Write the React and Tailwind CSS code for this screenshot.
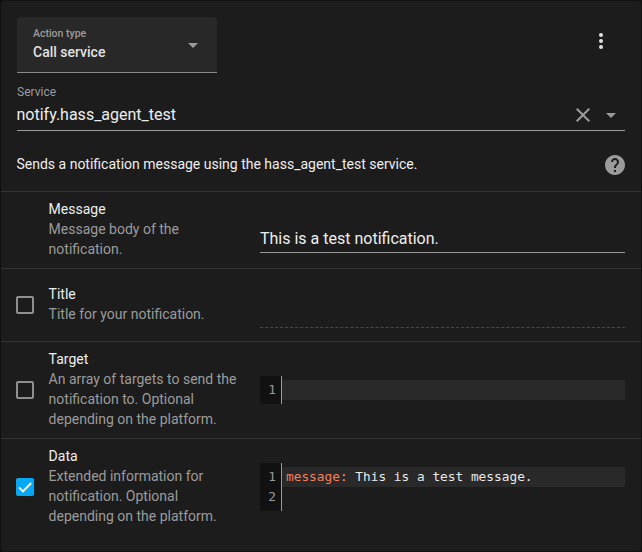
import React from "react";

function Caret() {
  return (
    <svg width="24" height="24" viewBox="0 0 24 24" fill="#9b9b9b">
      <path d="M7 10l5 5 5-5z" />
    </svg>
  );
}

function Checkbox({ checked }) {
  if (!checked) {
    return <div className="h-[18px] w-[18px] rounded-[2px] border-2 border-[#8f8f8f]" />;
  }
  return (
    <div className="h-[18px] w-[18px] rounded-[2px] bg-[#03a9f4]">
      <svg width="18" height="18" viewBox="0 0 18 18" fill="none" stroke="#fff" strokeWidth="1.9">
        <path d="M3 9.4l4 4L15.2 5" />
      </svg>
    </div>
  );
}

function Row({ height, labelTop = "pt-[7px]", title, lines, control, children }) {
  return (
    <div className={"flex border-t border-[#343434] pr-4 pl-[15px] " + height}>
      <div className="flex w-[32.6px] shrink-0 items-center">{control}</div>
      <div className={"w-[211.4px] shrink-0 whitespace-nowrap text-[14px] leading-5 " + labelTop}>
        <div className="text-[#eeeeee]">{title}</div>
        {lines.map((line) => (
          <div key={line} className="text-[#9b9b9b]">{line}</div>
        ))}
      </div>
      <div className="flex-1">{children}</div>
    </div>
  );
}

function Editor({ numbers, children }) {
  return (
    <div className="flex font-['DejaVu_Sans_Mono',monospace] text-[12.8px] leading-5">
      <div className="w-[22px] border-r border-[#9b9b9b] bg-[#111111] py-1 pr-[5px] text-right text-[#9b9b9b]">
        {numbers.map((n) => (
          <div key={n}>{n}</div>
        ))}
      </div>
      <div className="flex-1 py-1">
        <div className="h-5 bg-[#292929] pl-1 whitespace-pre text-[#e8e8e8]">{children}</div>
      </div>
    </div>
  );
}

export default function App() {
  return (
    <div className="h-[552px] w-[642px] bg-[#111111] p-px font-['Roboto',sans-serif]">
      <div className="h-[550px] overflow-hidden rounded-[4px] bg-[#1c1c1c]">
        <div className="flex h-[72px] justify-between px-4 pt-4">
          <div className="flex h-14 w-[200px] items-center justify-between rounded-t-[4px] border-b border-[#8b8b8b] bg-[#282828] pr-3 pl-4">
            <div className="font-medium whitespace-nowrap">
              <div className="text-[10.5px] leading-[14px] text-[#9b9b9b]">Action type</div>
              <div className="pt-px text-[14px] leading-[20px] text-[#e1e1e1]">Call service</div>
            </div>
            <Caret />
          </div>
          <div className="flex w-12 items-center justify-center">
            <svg width="24" height="24" viewBox="0 0 24 24" fill="#e1e1e1" className="-mt-2">
              <circle cx="12" cy="6" r="2" />
              <circle cx="12" cy="12" r="2" />
              <circle cx="12" cy="18" r="2" />
            </svg>
          </div>
        </div>

        <div className="mr-4 ml-4 h-[58px] border-b border-[#9b9b9b] pt-[9px]">
          <div className="text-[12px] leading-5 text-[#9b9b9b]">Service</div>
          <div className="-ml-[0.5px] flex h-6 items-center justify-between pt-0.5 pr-0.5">
            <div className="text-[16px] leading-6 text-[#eeeeee]">notify.hass_agent_test</div>
            <div className="flex items-center gap-1">
              <svg width="24" height="24" viewBox="0 0 24 24" fill="#9b9b9b">
                <path d="M19 6.41L17.59 5 12 10.59 6.41 5 5 6.41 10.59 12 5 17.59 6.41 19 12 13.41 17.59 19 19 17.59 13.41 12 19 6.41z" />
              </svg>
              <Caret />
            </div>
          </div>
        </div>

        <div className="flex h-[60px] items-center justify-between pt-2 pr-[14px] pl-[15.5px]">
          <div className="-mt-0.5 text-[14px] leading-5 text-[#eeeeee]">
            Sends a notification message using the hass_agent_test service.
          </div>
          <svg width="24" height="24" viewBox="0 0 24 24" fill="#9b9b9b">
            <path d="M12 2C6.48 2 2 6.48 2 12s4.48 10 10 10 10-4.48 10-10S17.52 2 12 2zm1 17h-2v-2h2v2zm2.07-7.75l-.9.92C13.45 12.9 13 13.5 13 15h-2v-.5c0-1.1.45-2.1 1.17-2.83l1.24-1.26c.37-.36.59-.86.59-1.41 0-1.1-.9-2-2-2s-2 .9-2 2H8c0-2.21 1.79-4 4-4s4 1.79 4 4c0 .88-.36 1.68-.93 2.25z" />
          </svg>
        </div>

        <Row height="h-[77px]" title="Message" lines={["Message body of the", "notification."]}>
          <div className="h-[61px] border-b border-[#9b9b9b] pt-[35px] text-[16px] leading-6 text-[#eeeeee]">
            This is a test notification.
          </div>
        </Row>
        <Row
          height="h-[73px]"
          labelTop="pt-[15px]"
          title="Title"
          lines={["Title for your notification."]}
          control={<Checkbox />}
        >
          <div className="h-[59px] border-b border-dashed border-[#494949]" />
        </Row>
        <Row
          height="h-[97px]"
          title="Target"
          lines={["An array of targets to send the", "notification to. Optional", "depending on the platform."]}
          control={<Checkbox />}
        >
          <div className="pt-[34px]">
            <Editor numbers={[1]} />
          </div>
        </Row>
        <Row
          height="h-[97px]"
          title="Data"
          lines={["Extended information for", "notification. Optional", "depending on the platform."]}
          control={<Checkbox checked />}
        >
          <div className="pt-6">
            <Editor numbers={[1, 2]}>
              <span className="text-[#f77c5b]">message</span>
              <span className="text-[#ffa07a]">:</span> This is a test message.
            </Editor>
          </div>
        </Row>
      </div>
    </div>
  );
}
